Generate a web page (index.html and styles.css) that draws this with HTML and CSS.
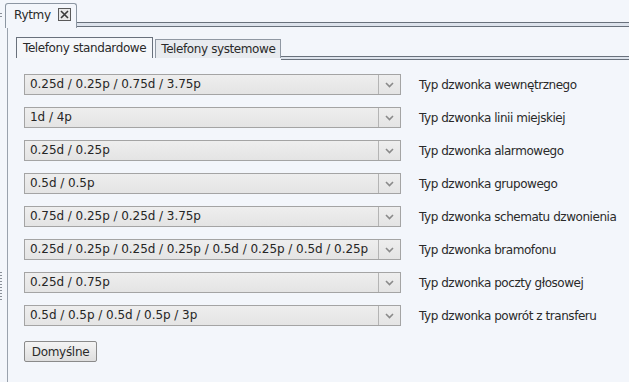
FILE: index.html
```html
<!DOCTYPE html>
<html>
<head>
<meta charset="utf-8">
<link rel="stylesheet" href="styles.css">
</head>
<body>
<div class="grip grip-top"></div>
<div class="grip grip-side"></div>
<div class="view">
  <div class="view-tabs">
    <div class="view-tab">
      <span class="view-title">Rytmy</span>
      <svg class="close" width="13" height="13" viewBox="0 0 13 13">
        <rect x="0.5" y="0.5" width="12" height="12" fill="#e8e8e8" stroke="#5a5a5a"/>
        <path d="M3 3 L10 10 M10 3 L3 10" stroke="#3a3a3a" stroke-width="1.6"/>
      </svg>
    </div>
    <div class="view-tab-fill"></div>
  </div>
  <div class="view-body">
    <div class="sub-tabs">
      <div class="sub-tab active">Telefony standardowe</div>
      <div class="sub-tab">Telefony systemowe</div>
      <div class="sub-tab-fill"></div>
    </div>
    <div class="rows">
      <div class="row"><div class="combo"><span class="combo-text">0.25d / 0.25p / 0.75d / 3.75p</span><span class="combo-btn"><svg width="9" height="6" viewBox="0 0 9 6"><path d="M1 1 L4.5 4.5 L8 1" fill="none" stroke="#8a8a8a" stroke-width="1.6"/></svg></span></div><span class="label">Typ dzwonka wewnętrznego</span></div>
      <div class="row"><div class="combo"><span class="combo-text">1d / 4p</span><span class="combo-btn"><svg width="9" height="6" viewBox="0 0 9 6"><path d="M1 1 L4.5 4.5 L8 1" fill="none" stroke="#8a8a8a" stroke-width="1.6"/></svg></span></div><span class="label">Typ dzwonka linii miejskiej</span></div>
      <div class="row"><div class="combo"><span class="combo-text">0.25d / 0.25p</span><span class="combo-btn"><svg width="9" height="6" viewBox="0 0 9 6"><path d="M1 1 L4.5 4.5 L8 1" fill="none" stroke="#8a8a8a" stroke-width="1.6"/></svg></span></div><span class="label">Typ dzwonka alarmowego</span></div>
      <div class="row"><div class="combo"><span class="combo-text">0.5d / 0.5p</span><span class="combo-btn"><svg width="9" height="6" viewBox="0 0 9 6"><path d="M1 1 L4.5 4.5 L8 1" fill="none" stroke="#8a8a8a" stroke-width="1.6"/></svg></span></div><span class="label">Typ dzwonka grupowego</span></div>
      <div class="row"><div class="combo"><span class="combo-text">0.75d / 0.25p / 0.25d / 3.75p</span><span class="combo-btn"><svg width="9" height="6" viewBox="0 0 9 6"><path d="M1 1 L4.5 4.5 L8 1" fill="none" stroke="#8a8a8a" stroke-width="1.6"/></svg></span></div><span class="label">Typ dzwonka schematu dzwonienia</span></div>
      <div class="row"><div class="combo"><span class="combo-text">0.25d / 0.25p / 0.25d / 0.25p / 0.5d / 0.25p / 0.5d / 0.25p</span><span class="combo-btn"><svg width="9" height="6" viewBox="0 0 9 6"><path d="M1 1 L4.5 4.5 L8 1" fill="none" stroke="#8a8a8a" stroke-width="1.6"/></svg></span></div><span class="label">Typ dzwonka bramofonu</span></div>
      <div class="row"><div class="combo"><span class="combo-text">0.25d / 0.75p</span><span class="combo-btn"><svg width="9" height="6" viewBox="0 0 9 6"><path d="M1 1 L4.5 4.5 L8 1" fill="none" stroke="#8a8a8a" stroke-width="1.6"/></svg></span></div><span class="label">Typ dzwonka poczty głosowej</span></div>
      <div class="row"><div class="combo"><span class="combo-text">0.5d / 0.5p / 0.5d / 0.5p / 3p</span><span class="combo-btn"><svg width="9" height="6" viewBox="0 0 9 6"><path d="M1 1 L4.5 4.5 L8 1" fill="none" stroke="#8a8a8a" stroke-width="1.6"/></svg></span></div><span class="label">Typ dzwonka powrót z transferu</span></div>
    </div>
    <div class="actions"><button class="btn">Domyślne</button></div>
  </div>
</div>
</body>
</html>
```

FILE: styles.css
```css
html, body {
  margin: 0;
  padding: 0;
  width: 629px;
  height: 382px;
  overflow: hidden;
  background: #f3f6fb;
  font-family: "DejaVu Sans", sans-serif;
  font-size: 12px;
  color: #262626;
}
body { position: relative; }
.grip {
  position: absolute;
  left: 0;
  width: 2px;
  background: repeating-linear-gradient(to bottom, #8a9099 0 1px, transparent 1px 3px);
}
.grip-top { top: 13px; height: 5px; }
.grip-side { top: 272px; height: 30px; }
.view {
  display: flex;
  flex-direction: column;
  height: 382px;
  padding-left: 5px;
  box-sizing: border-box;
}
.view-tabs {
  display: flex;
  align-items: flex-end;
  height: 28px;
  padding-top: 2px;
  box-sizing: border-box;
}
.view-tab {
  display: flex;
  align-items: center;
  justify-content: space-between;
  height: 25px;
  padding: 0 5px 3px 8px;
  box-sizing: border-box;
  width: 72px;
  border: 1px solid #8c96a2;
  border-bottom: none;
  border-radius: 3px 3px 0 0;
  background: #f3f6fb;
  letter-spacing: -0.3px;
}
.view-title { color: #2a2a2a; }
.close { display: block; flex: none; }
.view-tab-fill {
  flex: 1;
  height: 5px;
  border-top: 1px solid #69717c;
  border-bottom: 1px solid #69717c;
  background: #dde3ec;
  box-sizing: border-box;
  position: relative;
  top: -1px;
}
.view-body {
  flex: 1;
  margin-left: 2px;
  border-left: 1px solid #9aa2ad;
  padding: 10px 0 0 8px;
}
.sub-tabs {
  display: flex;
  align-items: flex-end;
  height: 20px;
}
.sub-tab {
  height: 19px;
  padding: 0 5px;
  box-sizing: border-box;
  border: 1px solid #9098a3;
  border-bottom: none;
  background: #e8ebef;
  line-height: 18px;
  color: #2a2a2a;
  letter-spacing: -0.4px;
}
.sub-tab.active {
  height: 21px;
  padding: 0 6px;
  background: #f5f7fa;
  border-color: #69717c;
  margin-right: 2px;
  line-height: 20px;
}
.sub-tab-fill {
  flex: 1;
  height: 4px;
  border-top: 1px solid #69717c;
  border-bottom: 1px solid #69717c;
  background: #dde3ec;
  box-sizing: border-box;
  margin-bottom: -2px;
}
.rows {
  display: flex;
  flex-direction: column;
  gap: 12px;
  padding: 16px 0 0 8px;
}
.row {
  display: flex;
  align-items: center;
  gap: 18px;
}
.combo {
  display: flex;
  width: 377px;
  height: 21px;
  box-sizing: border-box;
  border: 1px solid #a4a4a4;
  background: linear-gradient(#eeeeee, #e4e4e4);
}
.combo-text {
  flex: 1;
  padding-left: 5px;
  line-height: 19px;
  white-space: nowrap;
  overflow: hidden;
  letter-spacing: -0.05px;
}
.combo-btn {
  width: 21px;
  border-left: 1px solid #b4b4b4;
  display: flex;
  align-items: center;
  justify-content: center;
}
.label { white-space: nowrap; color: #2a2a2a; letter-spacing: -0.45px; }
.actions { padding: 15px 0 0 8px; }
.btn {
  font: inherit;
  letter-spacing: -0.3px;
  color: #2a2a2a;
  height: 21px;
  width: 73px;
  padding: 0;
  border: 1px solid #8a8a8a;
  border-radius: 2px;
  background: linear-gradient(#f4f4f4, #dedede);
}
```
